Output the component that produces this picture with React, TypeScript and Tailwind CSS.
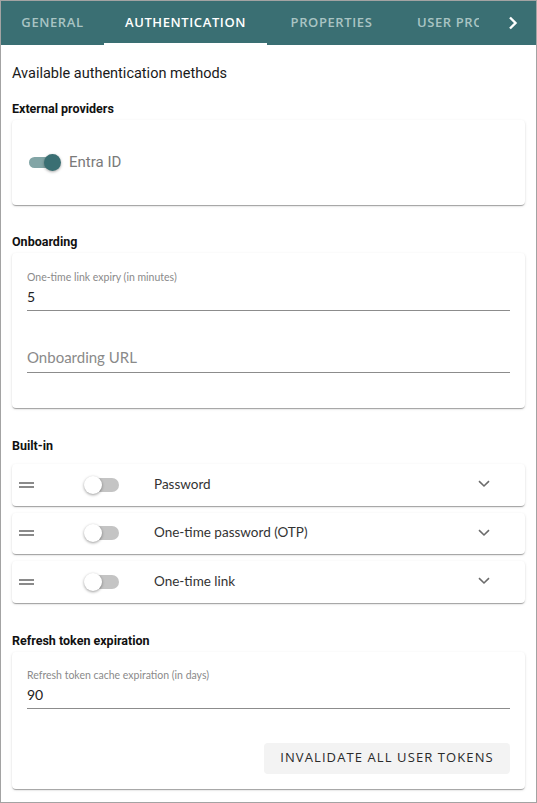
import React from "react";

const tabs = [
  { label: "GENERAL", w: "w-[103px] justify-center", active: false },
  { label: "AUTHENTICATION", w: "w-[163px] justify-center", active: true },
  { label: "PROPERTIES", w: "w-[129px] justify-center", active: false },
  { label: "USER PROFILE", w: "w-[150px] pl-[21px]", active: false },
];

const builtIn = ["Password", "One-time password (OTP)", "One-time link"];

const cardShadow =
  "shadow-[0_2px_1px_-1px_rgba(0,0,0,0.2),0_1px_1px_0_rgba(0,0,0,0.14),0_1px_3px_0_rgba(0,0,0,0.12)]";

const SectionTitle = ({ children, className = "" }: { children: React.ReactNode; className?: string }) => (
  <div className={`h-4 text-[12.5px] leading-4 font-bold text-[#111] font-['Roboto',sans-serif] ${className}`}>
    {children}
  </div>
);

const Field = ({ label, value }: { label: string; value: string }) => (
  <div className="flex flex-col">
    <span className="h-[14px] text-[10.5px] leading-[14px] text-[#8a8a8a] font-['Lato',sans-serif]">{label}</span>
    <span className="mt-[3px] h-5 text-[14px] leading-5 text-[#222] font-['Lato',sans-serif]">{value}</span>
    <div className="mt-[3px] h-px bg-[#8c8c8c]" />
  </div>
);

export default function App() {
  return (
    <div className="w-[537px] h-[803px] border border-[#a3a3a3] bg-white overflow-hidden flex flex-col font-['Roboto',sans-serif]">
      {/* tab bar */}
      <div className="h-[44px] shrink-0 bg-[#3a6f73] flex">
        <div className="flex-1 flex overflow-hidden">
          {tabs.map((t) => (
            <div
              key={t.label}
              className={`${t.w} shrink-0 relative flex items-center whitespace-nowrap text-[13px] tracking-[0.6px] font-semibold font-['Open_Sans',sans-serif] ${
                t.active ? "text-white" : "text-[#a9c4c3]"
              }`}
            >
              {t.label}
              {t.active && <div className="absolute left-0 right-0 bottom-0 h-[2px] bg-white" />}
            </div>
          ))}
        </div>
        <div className="w-[57px] shrink-0 flex items-center justify-end pr-[18px]">
          <svg width="10" height="14" viewBox="0 0 10 14">
            <path d="M2 1.5 L7.5 7 L2 12.5" fill="none" stroke="white" strokeWidth="2.4" />
          </svg>
        </div>
      </div>

      <div className="px-[11px] flex flex-col">
        <div className="mt-[19px] h-5 text-[14.5px] leading-5 text-[#1a1a1a]">Available authentication methods</div>

        <SectionTitle className="mt-[17px]">External providers</SectionTitle>
        <div className={`mt-[3px] h-[85px] rounded bg-white ${cardShadow} flex items-center pl-[17px]`}>
          <div className="relative w-[33px] h-[18px] flex items-center">
            <div className="w-[28px] h-[11px] rounded-full bg-[#82a5a6]" />
            <div className="absolute left-[15px] top-0 w-[17px] h-[17px] rounded-full bg-[#3a6f73] shadow-[0_1px_3px_rgba(0,0,0,0.35)]" />
          </div>
          <span className="ml-[7px] text-[15px] text-[#7a7a7a]">Entra ID</span>
        </div>

        <SectionTitle className="mt-[29px]">Onboarding</SectionTitle>
        <div className={`mt-[3px] h-[155px] rounded bg-white ${cardShadow} px-[15px] pt-[17px] flex flex-col`}>
          <Field label="One-time link expiry (in minutes)" value="5" />
          <div className="mt-[34px] h-6 text-[15px] leading-6 text-[#8a8a8a] font-['Lato',sans-serif]">Onboarding URL</div>
          <div className="mt-[3px] h-px bg-[#8c8c8c]" />
        </div>

        <SectionTitle className="mt-[30px]">Built-in</SectionTitle>
        <div className="mt-[10px] flex flex-col gap-[7px]">
          {builtIn.map((name) => (
            <div key={name} className={`h-[41.5px] rounded bg-white ${cardShadow} flex items-center`}>
              <div className="ml-[7px] w-[15px] flex flex-col gap-[2px]">
                <div className="h-[2px] bg-[#8a8a8a]" />
                <div className="h-[2px] bg-[#8a8a8a]" />
              </div>
              <div className="ml-[50px] relative w-[36px] h-[18px] flex items-center">
                <div className="ml-[1px] w-[34px] h-[14px] rounded-full bg-[#c4c4c4]" />
                <div className="absolute left-0 top-0 w-[18px] h-[18px] rounded-full bg-white shadow-[0_1px_3px_rgba(0,0,0,0.4)]" />
              </div>
              <span className="ml-[34px] flex-1 pb-[2px] text-[13.5px] text-[#333] font-['Lato',sans-serif]">{name}</span>
              <svg className="mr-[35px] mb-[1px]" width="12" height="8" viewBox="0 0 12 8">
                <path d="M1 1.2 L6 6 L11 1.2" fill="none" stroke="#6b6b6b" strokeWidth="1.6" />
              </svg>
            </div>
          ))}
        </div>

        <SectionTitle className="mt-[30px]">Refresh token expiration</SectionTitle>
        <div className={`mt-[3px] h-[137px] rounded bg-white ${cardShadow} px-[15px] pt-[16px] flex flex-col`}>
          <Field label="Refresh token cache expiration (in days)" value="90" />
          <div className="mt-[34px] flex justify-end">
            <div className="w-[246px] h-[31px] rounded bg-[#f3f3f3] flex items-center justify-center text-[13px] tracking-[1.1px] text-[#2a2a2a] font-['Open_Sans',sans-serif]">
              INVALIDATE ALL USER TOKENS
            </div>
          </div>
        </div>
      </div>
    </div>
  );
}
